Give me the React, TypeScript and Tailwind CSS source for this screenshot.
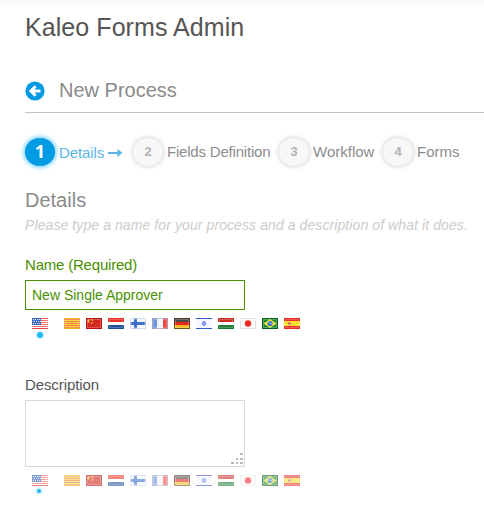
import React from "react";

const stripes = (colors: string[]) =>
  colors.map((c, i) => (
    <rect key={i} x="0" y={(i * 11) / colors.length} width="16" height={11 / colors.length} fill={c} />
  ));

const flags: Record<string, React.ReactNode> = {
  us: (
    <>
      {stripes(["#ea5a55", "#ffffff", "#ee6a62", "#ffffff", "#ee6a62", "#ffffff", "#ee6a62", "#ffffff", "#ee6a62", "#ffffff", "#e04840"])}
      <rect width="9" height="7" fill="#3a66c4" />
      <path d="M1 1.5h8M2 3.5h7M1 5.5h8" stroke="#dbe6fa" strokeDasharray="1 1" />
    </>
  ),
  catalonia: stripes(["#f6c020", "#f07030", "#f8d43c", "#f07838", "#f8d848", "#f07838", "#f8d848", "#f07838", "#f8d43c", "#f07030", "#f0b01c"]),
  china: (
    <>
      <rect width="16" height="11" fill="#d22a20" />
      <path d="M1 3h3M2.5 1.5v3M5 1.5h1M6 2.5h1M6 4.5h1M5 5.5h1" stroke="#f8cc30" />
    </>
  ),
  netherlands: (
    <>
      <rect width="16" height="11" fill="#fff" />
      <rect width="16" height="4" fill="#ee3028" />
      <rect y="7" width="16" height="4" fill="#1e4e9c" />
    </>
  ),
  finland: (
    <>
      <rect width="16" height="11" fill="#f4f7fc" />
      <path d="M0 5.5h16M5.5 0v11" stroke="#3a70c8" strokeWidth="3" />
    </>
  ),
  france: (
    <>
      <rect width="16" height="11" fill="#f2f4f8" />
      <rect width="5" height="11" fill="#6c94d8" />
      <rect x="11" width="5" height="11" fill="#ee4a40" />
    </>
  ),
  germany: (
    <>
      <rect width="16" height="4" fill="#4c4a44" />
      <rect y="4" width="16" height="3" fill="#e42820" />
      <rect y="7" width="16" height="4" fill="#f2bc20" />
    </>
  ),
  israel: (
    <>
      <rect width="16" height="11" fill="#f6f8fe" />
      <path d="M0 .5h16M0 10.5h16" stroke="#3858d0" />
      <path d="M8 3l2 3.6H6zM8 8l-2-3.6h4z" fill="#b8c8f8" stroke="#6888ec" strokeWidth=".8" />
    </>
  ),
  hungary: (
    <>
      <rect width="16" height="11" fill="#fff" />
      <rect width="16" height="4" fill="#cc2c24" />
      <rect y="7" width="16" height="4" fill="#1c7c34" />
    </>
  ),
  japan: (
    <>
      <rect width="16" height="11" fill="#fbfbfb" />
      <circle cx="8" cy="5.5" r="3.2" fill="#f22c24" />
    </>
  ),
  brazil: (
    <>
      <rect width="16" height="11" fill="#1c8c34" />
      <path d="M8 1l6.5 4.5L8 10 1.5 5.5z" fill="#f6e63c" />
      <circle cx="8" cy="5.5" r="2.6" fill="#3470c8" />
      <path d="M6 4.8q2-.4 4 1.4" stroke="#d0e4f4" strokeWidth=".7" fill="none" />
    </>
  ),
  spain: (
    <>
      <rect width="16" height="11" fill="#f8dc30" />
      <rect width="16" height="3" fill="#e82c24" />
      <rect y="8" width="16" height="3" fill="#e82c24" />
      <path d="M4 4h3v3H4z" fill="#e8987c" />
      <path d="M4.5 5.5h2" stroke="#c85040" />
    </>
  ),
};

const edges: Record<string, string> = {
  us: "none",
  catalonia: "none",
  china: "#a80c10",
  netherlands: "none",
  finland: "#c8d4ec",
  france: "#a8a8c8",
  germany: "#50301c",
  israel: "none",
  hungary: "none",
  japan: "#dcdcdc",
  brazil: "#085018",
  spain: "none",
};

function Flag({ name }: { name: string }) {
  return (
    <svg width="16" height="11" viewBox="0 0 16 11" className="block shrink-0">
      {flags[name]}
      <rect x="1.5" y="1.5" width="13" height="8" fill="none" stroke="#fff" strokeOpacity=".22" />
      <rect x=".5" y=".5" width="15" height="10" fill="none" stroke={edges[name]} strokeOpacity=".75" />
    </svg>
  );
}

function FlagRow({ faded = false }: { faded?: boolean }) {
  return (
    <div className="mt-2 flex h-[22px] pl-[7px]">
      <div className="mr-4 flex w-4 flex-col items-center">
        <div className={faded ? "opacity-65" : ""}>
          <Flag name="us" />
        </div>
        <span
          className={
            faded
              ? "mt-[3px] mr-[2px] size-1 rounded-full bg-[#22b8ee] shadow-[0_0_3px_1px_#a8e6fb]"
              : "mt-[3px] size-[6px] rounded-full bg-[#22baf0] shadow-[0_0_3px_#7fdcfa]"
          }
        />
      </div>
      <div className={faded ? "flex gap-[6px] opacity-60" : "flex gap-[6px]"}>
        {Object.keys(flags)
          .slice(1)
          .map((name) => (
            <Flag key={name} name={name} />
          ))}
      </div>
    </div>
  );
}

function StepCircle({ n }: { n: number }) {
  return (
    <span className="flex h-7 w-[30px] shrink-0 items-center justify-center rounded-[50%] bg-[#f7f7f7] text-[13px] font-bold text-[#b3b3b3] shadow-[0_0_4px_1px_#d6d6d6]">
      {n}
    </span>
  );
}

export default function App() {
  return (
    <main className="h-[514px] w-[484px] overflow-hidden bg-linear-to-b from-[#f6f6f6] to-white to-[8px] pl-[25px] font-['Liberation_Sans',Arial,sans-serif] whitespace-nowrap text-[#555]">
      <h1 className="h-[54px] text-[25px] leading-[54px] tracking-[0.07px]">Kaleo Forms Admin</h1>

      <header className="mt-[18px] flex h-[41px] border-b border-[#c4c4c4] text-[#8a8a8a]">
        <svg width="20" height="20" viewBox="0 0 20 20" className="mt-[9px] mr-[14px]">
          <circle cx="10" cy="10" r="9.6" fill="#009ae5" />
          <path d="M10.6 5.2L5.8 10l4.8 4.8M6 10h9.5" fill="none" stroke="#fff" strokeWidth="2.9" />
        </svg>
        <h2 className="text-[20px] leading-9">New Process</h2>
      </header>

      <ol className="mt-[25px] flex h-7 text-[15px] leading-7 text-[#8c8c8c]">
        <li className="flex w-[108px] text-[#5ab4e8]">
          <span className="mr-1 flex h-7 w-[30px] items-center justify-center rounded-[50%] bg-[#009ae5] pb-[2px] font-['Open_Sans',sans-serif] text-[18px] font-bold text-white shadow-[0_0_5px_1px_#59c6f7]">
            1
          </span>
          <span className="pt-px tracking-[-0.1px]">Details</span>
          <svg width="15" height="8" viewBox="0 0 15 8" className="mt-[11px] ml-[4px]">
            <path d="M0 4h11" stroke="#5ab4e8" strokeWidth="2" />
            <path d="M9.5 0L14.5 4l-5 4z" fill="#5ab4e8" />
          </svg>
        </li>
        <li className="flex w-[146px] gap-1">
          <StepCircle n={2} />
          <span className="tracking-[-0.2px]">Fields Definition</span>
        </li>
        <li className="flex w-[104px] gap-1">
          <StepCircle n={3} />
          <span>Workflow</span>
        </li>
        <li className="flex gap-1">
          <StepCircle n={4} />
          <span>Forms</span>
        </li>
      </ol>

      <h3 className="mt-[22px] h-6 text-[20px] leading-6 text-[#8a8a8a]">Details</h3>
      <p className="mt-1 h-[18px] text-[14px] leading-[18px] tracking-[0.09px] text-[#ccc] italic">
        Please type a name for your process and a description of what it does.
      </p>

      <label className="mt-[22px] block h-[18px] text-[15px] leading-[18px] tracking-[-0.2px] text-[#489000]">
        Name (Required)
      </label>
      <div className="mt-[6px] h-[30px] w-[220px] border border-[#489000] bg-white pl-[6px] text-[14px] leading-7 text-[#489000]">
        New Single Approver
      </div>
      <FlagRow />

      <label className="mt-9 block h-[18px] text-[15px] leading-[18px] tracking-[-0.1px]">Description</label>
      <div className="mt-[6px] flex h-[67px] w-[220px] items-end justify-end border border-[#d9d9d9] bg-white pr-px pb-px">
        <svg width="12" height="12" viewBox="0 0 12 12" fill="#b8b8b8">
          <path d="M9 0h3v2H9zM5 5h2v2H5zM9 5h3v2H9zM0 9h3v2H0zM5 9h2v2H5zM9 9h3v2H9z" />
        </svg>
      </div>
      <FlagRow faded />
    </main>
  );
}
